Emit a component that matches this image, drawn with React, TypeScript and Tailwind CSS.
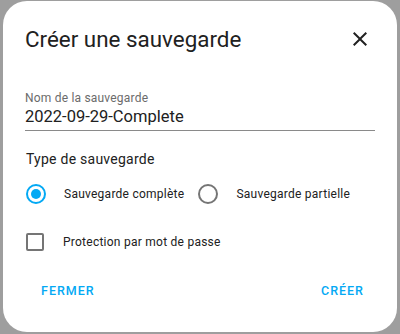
import React from "react";

export default function App() {
  return (
    <div className="w-[400px] h-[334px] bg-[#9e9e9e] pl-[3px] pt-[1px] overflow-hidden" style={{ fontFamily: "Roboto, 'Noto Sans', sans-serif" }}>
      <div className="w-[394px] h-[331px] rounded-[24px] bg-white flex flex-col">
        <div className="flex items-center justify-between pl-[22px] pr-[25px] pt-[24px]">
          <h2 className="text-[22.4px] leading-[28px] text-[#212121] font-normal">Créer une sauvegarde</h2>
          <svg width="24" height="24" viewBox="0 0 24 24" className="text-[#212121]">
            <path fill="currentColor" d="M19,6.41L17.59,5L12,10.59L6.41,5L5,6.41L10.59,12L5,17.59L6.41,19L12,13.41L17.59,19L19,17.59L13.41,12L19,6.41Z" />
          </svg>
        </div>
        <div className="px-[22px] mt-[37px]">
          <div className="text-[12px] leading-[16px] text-[#6b6b6b] tracking-[0.2px]">Nom de la sauvegarde</div>
          <div className="text-[16.5px] leading-[20px] text-[#212121] mt-[1px] pb-[3px] border-b border-[#8a8a8a] w-[350px]">2022-09-29-Complete</div>
        </div>
        <div className="px-[23px] mt-[18px] text-[14px] leading-[20px] tracking-[0.25px] text-[#212121]">Type de sauvegarde</div>
        <div className="flex items-center pl-[23px] mt-[13px] h-[24px]">
          <div className="w-[20px] h-[20px] rounded-full border-2 border-[#03a9f4] flex items-center justify-center">
            <div className="w-[10px] h-[10px] rounded-full bg-[#03a9f4]" />
          </div>
          <span className="ml-[18px] text-[12px] tracking-[0.25px] text-[#212121]">Sauvegarde complète</span>
          <div className="ml-[14px] w-[20px] h-[20px] rounded-full border-2 border-[#757575]" />
          <span className="ml-[18px] text-[12px] tracking-[0.25px] text-[#212121]">Sauvegarde partielle</span>
        </div>
        <div className="flex items-center pl-[23px] mt-[24px] h-[24px]">
          <div className="w-[18px] h-[18px] rounded-[2px] border-2 border-[#757575]" />
          <span className="ml-[19px] text-[12px] tracking-[0.25px] text-[#212121]">Protection par mot de passe</span>
        </div>
        <div className="flex justify-between pl-[38px] pr-[33px] mt-[28px]">
          <span className="text-[12.5px] font-medium tracking-[1px] text-[#03a9f4] uppercase">Fermer</span>
          <span className="text-[12.5px] font-medium tracking-[1px] text-[#03a9f4] uppercase">Créer</span>
        </div>
      </div>
    </div>
  );
}
